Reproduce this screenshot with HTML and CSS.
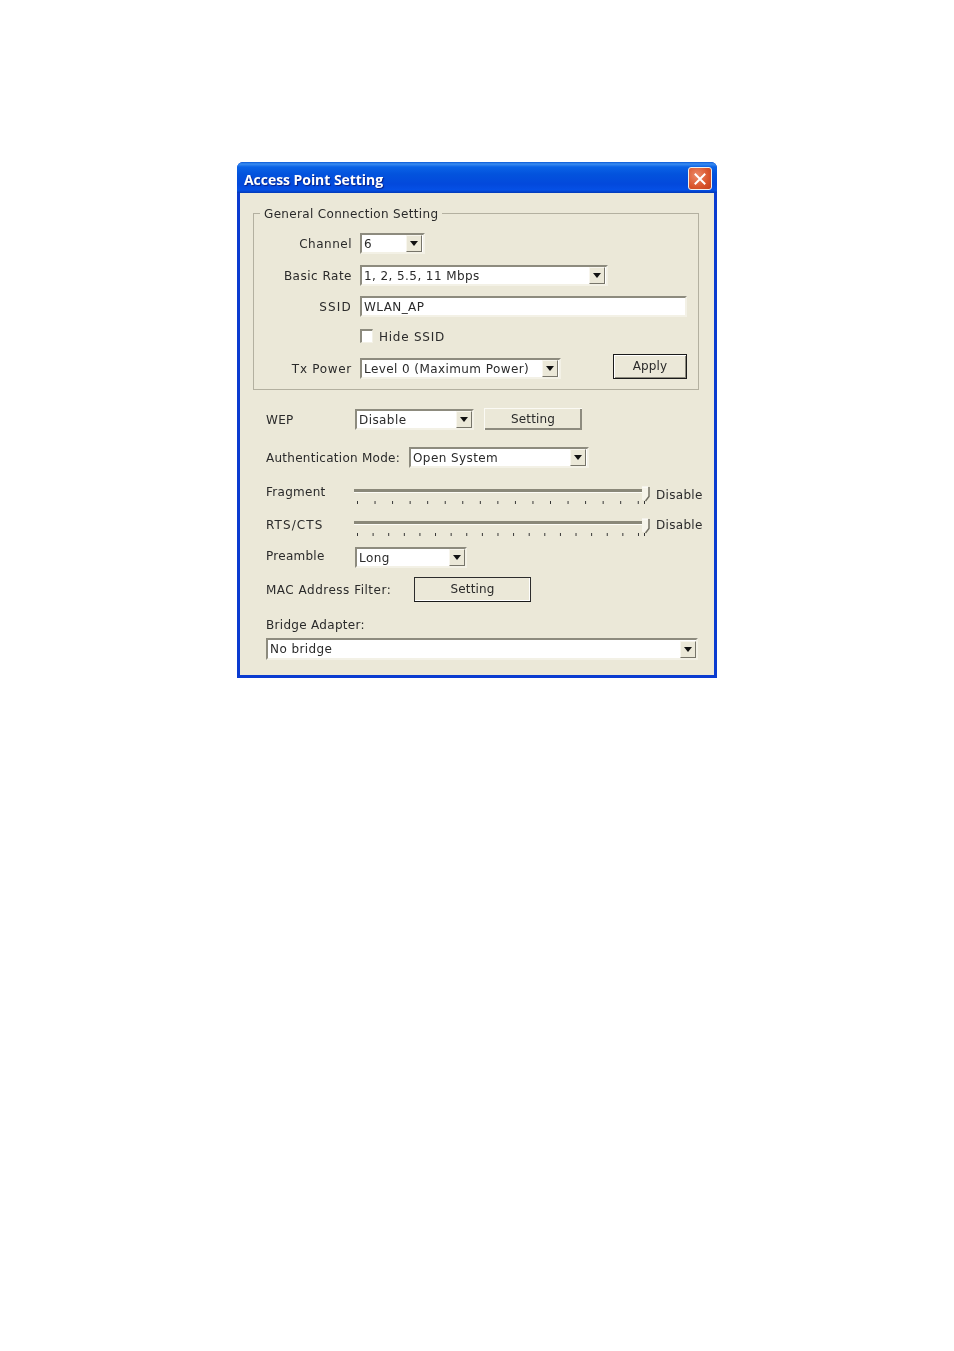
FILE: index.html
```html
<!DOCTYPE html>
<html lang="en">
<head>
<meta charset="utf-8">
<title>Access Point Setting</title>
<link rel="stylesheet" href="styles.css">
</head>
<body>
<svg width="0" height="0" class="defs"><defs>
<symbol id="arrow" viewBox="0 0 8 5"><path d="M0 0H8L4 5Z" fill="#111"/></symbol>
<symbol id="thumb" viewBox="0 0 9 16"><path d="M1 1H7V10L4 14H1Z" fill="#f6f4ea"/><path d="M8 1V10.5L4.5 15" fill="none" stroke="#6f6d62" stroke-width="1.4"/><path d="M1 1H7" stroke="#fff" fill="none"/></symbol>
</defs></svg>
<main class="window">
  <header class="titlebar">
    <h1 class="title">Access Point Setting</h1>
    <div class="close"><svg viewBox="0 0 12 12" width="12" height="12"><path d="M1.5 1.5L10.5 10.5M10.5 1.5L1.5 10.5" stroke="#fff" stroke-width="2" stroke-linecap="square" fill="none"/></svg></div>
  </header>
  <div class="client">
    <fieldset class="group">
      <legend class="legend">General Connection Setting</legend>
      <div class="row r-channel"><label class="lab">Channel</label>
        <div class="combo w-65"><span class="val">6</span><span class="drop"><svg width="8" height="5"><use href="#arrow"/></svg></span></div></div>
      <div class="row r-rate"><label class="lab">Basic Rate</label>
        <div class="combo w-248"><span class="val">1, 2, 5.5, 11 Mbps</span><span class="drop"><svg width="8" height="5"><use href="#arrow"/></svg></span></div></div>
      <div class="row r-ssid"><label class="lab lab-caps">SSID</label>
        <div class="combo w-327"><span class="val">WLAN_AP</span></div></div>
      <div class="row r-hide"><span class="lab"></span><span class="check"></span><span class="check-text">Hide SSID</span></div>
      <div class="row r-tx"><label class="lab lab-tx">Tx Power</label>
        <div class="combo w-201"><span class="val">Level 0 (Maximum Power)</span><span class="drop"><svg width="8" height="5"><use href="#arrow"/></svg></span></div>
        <button class="btn btn-apply">Apply</button></div>
    </fieldset>
    <section class="lower">
      <div class="row r-wep"><label class="lab-l w-l89">WEP</label>
        <div class="combo w-119 nudge"><span class="val">Disable</span><span class="drop"><svg width="8" height="5"><use href="#arrow"/></svg></span></div>
        <button class="btn btn-flat">Setting</button></div>
      <div class="row r-auth"><label class="lab-l w-l143">Authentication Mode:</label>
        <div class="combo w-180"><span class="val">Open System</span><span class="drop"><svg width="8" height="5"><use href="#arrow"/></svg></span></div></div>
      <div class="row r-slider r-frag"><label class="lab-l w-l88">Fragment</label>
        <div class="slider"><div class="track"></div><svg class="thumb" width="9" height="16"><use href="#thumb"/></svg><div class="ticks t-frag"></div></div>
        <span class="sl-val">Disable</span></div>
      <div class="row r-slider r-rts"><label class="lab-l w-l88 sp-wide">RTS/CTS</label>
        <div class="slider"><div class="track"></div><svg class="thumb" width="9" height="16"><use href="#thumb"/></svg><div class="ticks t-rts"></div></div>
        <span class="sl-val">Disable</span></div>
      <div class="row r-pre"><label class="lab-l w-l89 up">Preamble</label>
        <div class="combo w-112 nudge"><span class="val">Long</span><span class="drop"><svg width="8" height="5"><use href="#arrow"/></svg></span></div></div>
      <div class="row r-mac"><label class="lab-l w-l148 sp-mac">MAC Address Filter:</label>
        <button class="btn btn-mac">Setting</button></div>
      <div class="bridge-label">Bridge Adapter:</div>
      <div class="combo w-432 bridge nudge"><span class="val">No bridge</span><span class="drop"><svg width="8" height="5"><use href="#arrow"/></svg></span></div>
    </section>
  </div>
</main>
</body>
</html>
```
FILE: styles.css
```css
* { box-sizing: border-box; }
html, body { margin: 0; background: #fff; }
body { height: 1351px; overflow: hidden; font-family: "DejaVu Sans", Verdana, sans-serif; font-size: 12px; color: #2a2a2a; }
.defs { position: absolute; }
.window { margin: 162px 0 0 237px; width: 480px; height: 516px; border-radius: 6px 6px 0 0; overflow: hidden; background: #0a3bd0; display: flex; flex-direction: column; filter: blur(0.35px); }
.titlebar { height: 31px; flex: none; display: flex; align-items: center; justify-content: space-between; padding: 0 5px 0 7px;
  background: linear-gradient(to bottom, #0a5ad8 0, #3a8cf0 2px, #0a62e6 5px, #0353dd 12px, #0349dc 22px, #0550e6 28px, #0339b8 31px); }
.title { margin: 0; font: bold 14px "Open Sans", "DejaVu Sans", sans-serif; color: #fff; text-shadow: 1px 1px 1px #0a1f80; letter-spacing: -0.05px; transform: translateY(2px); }
.close { width: 24px; height: 23px; border: 1px solid #f2efe8; border-radius: 3px; background: radial-gradient(circle at 35% 35%, #ec8a68, #d9552c 60%, #c23f1c); display: flex; align-items: center; justify-content: center; transform: translateY(1px); }
.client { flex: 1; margin: 0 3px 3px; background: #ebe8d8; overflow: hidden; }
.group { margin: 13px 0 0 13px; padding: 13px 11px 9px 0; width: 446px; height: 184px; border: 1px solid #b3b0a0; min-inline-size: 0; }
.legend { margin-left: 6px; padding: 0 4px; height: 14px; line-height: 17px; letter-spacing: 0.33px; }
.row { display: flex; align-items: center; }
.lab { width: 98px; margin-right: 8px; text-align: right; flex: none; letter-spacing: 0.5px; }
.lab-caps { letter-spacing: 1.2px; }
.lab-tx { letter-spacing: 0.7px; }
.combo { height: 21px; flex: none; display: flex; align-items: center; justify-content: space-between; background: #fff; padding: 0 2px 0 2px;
  border: 2px solid; border-color: #8d8b7e #f3f1e6 #f3f1e6 #8d8b7e; letter-spacing: 0.42px; }
.val { white-space: nowrap; line-height: 17px; padding-top: 1px; }
.drop { width: 16px; height: 17px; background: #ebe8d8; border: 1px solid; border-color: #f8f6ee #77756a #77756a #f8f6ee; display: flex; align-items: center; justify-content: center; flex: none; margin-right: -1px; }
.nudge .drop { margin-right: -2px; }
.drop svg { display: block; }
.w-65 { width: 65px; } .w-248 { width: 248px; } .w-327 { width: 327px; } .w-201 { width: 201px; } .w-119 { width: 119px; } .w-180 { width: 180px; } .w-112 { width: 112px; } .w-432 { width: 432px; }
.r-channel { height: 21px; }
.r-rate { height: 21px; margin-top: 11px; }
.r-ssid { height: 21px; margin-top: 10px; }
.r-hide { height: 14px; margin-top: 12px; }
.r-tx { height: 21px; margin-top: 15px; align-items: flex-end; }
.r-tx .lab { align-self: center; }
.check { width: 13px; height: 14px; background: #fff; border: 1px solid; border-width: 2px 1px 1px 2px; border-color: #8d8b7e #f3f1e6 #f3f1e6 #8d8b7e; flex: none; margin-right: 6px; }
.check-text { letter-spacing: 0.75px; padding-top: 2px; }
.btn { font: inherit; color: inherit; background: #ebe8d8; padding: 0 0 2px; flex: none; letter-spacing: 0.15px; }
.btn-apply { width: 74px; height: 25px; margin-left: auto; border: 1px solid #1a1a1a; box-shadow: inset 1px 1px 0 #fff, inset -1px -1px 0 #8d8b7e; }
.btn-flat { width: 98px; height: 22px; margin-left: 10px; margin-top: -1px; padding-bottom: 0; border: none; box-shadow: inset 1px 1px 0 #fbfaf4, inset -2px -2px 0 #8d8b7e; }
.btn-mac { width: 117px; height: 25px; border: 1px solid #2c2c2c; border-bottom-color: #1a1a1a; box-shadow: inset -1px -1px 0 #fff; }
.lower { padding-left: 26px; margin-top: 1px; }
.lab-l { flex: none; white-space: nowrap; letter-spacing: 0.27px; }
.sp-wide { letter-spacing: 1.1px; }
.sp-mac { letter-spacing: 0.5px; }
.w-l89 { width: 89px; } .w-l88 { width: 88px; } .w-l143 { width: 143px; } .w-l148 { width: 148px; }
.r-wep { height: 21px; margin-top: 19px; }
.r-auth { height: 21px; margin-top: 17px; }
.r-slider { height: 25px; align-items: flex-start; }
.r-frag { margin-top: 15px; }
.r-rts { margin-top: 7px; }
.r-slider .lab-l { line-height: 18px; }
.r-rts .lab-l { line-height: 20px; }
.slider { width: 296px; height: 25px; position: relative; flex: none; }
.track { position: absolute; left: 0; top: 6px; width: 291px; height: 4px; background: #8a8879; border-bottom: 1px solid #fdfcf6; }
.thumb { position: absolute; right: 0; top: 3px; display: block; }
.ticks { position: absolute; left: 3px; top: 18px; height: 3px; width: 288px; background-repeat: repeat-x; background-image: linear-gradient(to right, #333 1px, transparent 1px); }
.ticks::after { content: ""; position: absolute; right: 0; top: 0; width: 1px; height: 3px; background: #333; }
.t-frag { background-size: 17.55px 3px; }
.t-rts { background-size: 15.62px 3px; }
.sl-val { margin-left: 6px; line-height: 24px; letter-spacing: 0.3px; }
.r-rts .sl-val { line-height: 20px; }
.r-pre { height: 21px; margin-top: 7px; }
.up { transform: translateY(-2px); }
.r-mac { height: 25px; margin-top: 9px; }
.bridge-label { margin-top: 16px; line-height: 14px; letter-spacing: 0.3px; }
.bridge { margin-top: 6px; height: 22px; }
```
